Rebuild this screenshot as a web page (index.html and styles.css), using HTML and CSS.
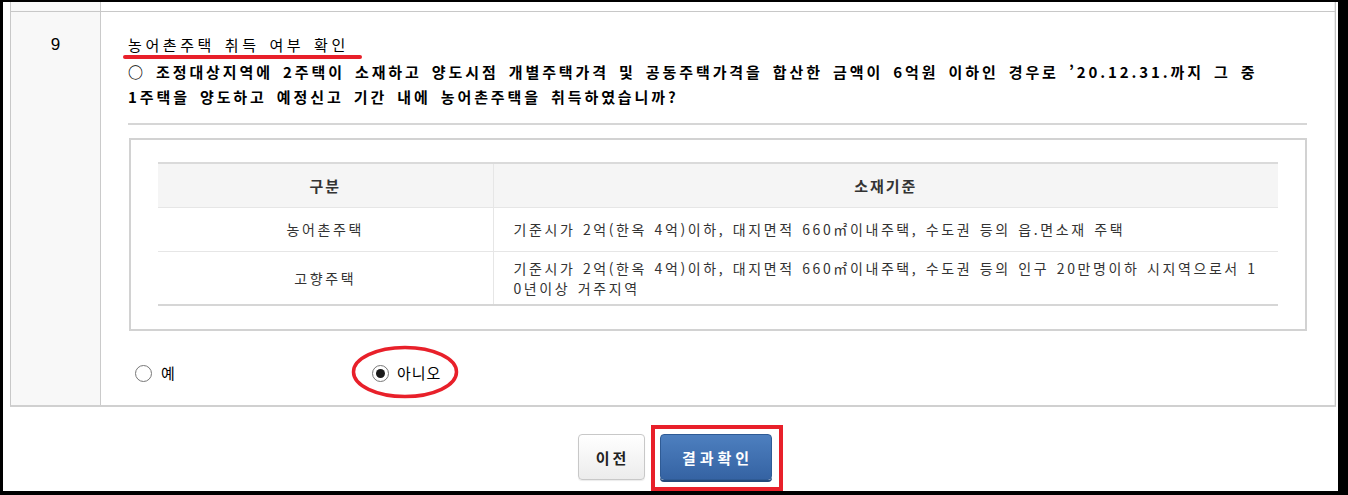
FILE: index.html
```html
<!DOCTYPE html>
<html lang="ko">
<head>
<meta charset="utf-8">
<title>농어촌주택 취득 여부 확인</title>
<link rel="stylesheet" href="styles.css">
</head>
<body>
<div class="frame">
  <div class="board">
    <div class="prev-row">
      <div class="num-cell"></div>
      <div class="body-cell"></div>
    </div>
    <div class="row">
      <div class="num-cell num">9</div>
      <div class="body-cell content">
        <div class="q-title">농어촌주택 취득 여부 확인</div>
        <p class="q-text">○ 조정대상지역에 2주택이 소재하고 양도시점 개별주택가격 및 공동주택가격을 합산한 금액이 6억원 이하인 경우로 ’20.12.31.까지 그 중 1주택을 양도하고 예정신고 기간 내에 농어촌주택을 취득하였습니까?</p>
        <div class="divider"></div>
        <div class="info-box">
          <table class="info">
            <thead>
              <tr><th class="c1">구분</th><th class="c2">소재기준</th></tr>
            </thead>
            <tbody>
              <tr class="r1"><td class="c1">농어촌주택</td><td class="c2 left">기준시가 2억(한옥 4억)이하, 대지면적 660㎡이내주택, 수도권 등의 읍.면소재 주택</td></tr>
              <tr class="r2"><td class="c1">고향주택</td><td class="c2 left">기준시가 2억(한옥 4억)이하, 대지면적 660㎡이내주택, 수도권 등의 인구 20만명이하 시지역으로서 10년이상 거주지역</td></tr>
            </tbody>
          </table>
        </div>
        <div class="choices">
          <label class="choice yes"><span class="radio"></span><span class="lbl">예</span></label>
          <label class="choice no"><span class="radio checked"></span><span class="lbl">아니오</span></label>
        </div>
      </div>
    </div>
  </div>
  <div class="actions">
    <button class="btn btn-prev" type="button">이전</button>
    <button class="btn btn-go" type="button">결과확인</button>
  </div>
</div>
<div class="annot">
  <div class="mark-underline"></div>
  <svg class="mark-ellipse" width="1348" height="495" viewBox="0 0 1348 495"><ellipse cx="405" cy="372" rx="51.5" ry="24.5" fill="none" stroke="#e8202a" stroke-width="3.5"/></svg>
  <div class="mark-box"></div>
</div>
</body>
</html>
```
FILE: styles.css
```css
* { box-sizing: border-box; }
html, body { margin: 0; padding: 0; background: #fff; }
body {
  position: relative;
  width: 1348px;
  height: 495px;
  overflow: hidden;
  font-family: "Noto Sans CJK KR", "Noto Sans", sans-serif;
  color: #000;
}
.frame {
  height: 495px;
  border-style: solid;
  border-color: #000;
  border-width: 2px 10px 4px 3px;
  display: flex;
  flex-direction: column;
}
.board {
  margin: 0 2px 0 7px;
  border-left: 1px solid #c8c8c8;
  border-right: 1px solid #c4c4c4;
  border-bottom: 2px solid #d0d0d0;
}
.prev-row, .row { display: flex; }
.prev-row { height: 10px; border-bottom: 1px solid #c8c8c8; }
.num-cell {
  width: 90px;
  flex: none;
  background: #f8f8f8;
  border-right: 1px solid #cacaca;
}
.body-cell { flex: 1; border-right: 1px solid #ececec; }
.row { height: 393px; }
.num {
  text-align: center;
  font-size: 17px;
  line-height: 22px;
  padding-top: 22px;
  font-family: "Liberation Sans", "Noto Sans CJK KR", sans-serif;
}
.content { padding: 22px 27px 0 27px; }
.q-title {
  font-size: 15px;
  line-height: 22px;
  letter-spacing: 3.6px;
  word-spacing: 2px;
}
.q-text {
  margin: 3px 0 0;
  font-size: 15px;
  font-weight: bold;
  line-height: 25px;
  letter-spacing: 2.9px;
  word-spacing: 3px;
  word-break: keep-all;
}
.divider {
  margin-top: 14px;
  border-top: 2px solid #d6d6d6;
}
.info-box {
  margin-top: 13px;
  margin-left: 1px;
  height: 193px;
  border: 2px solid #d2d2d2;
  padding: 22px 27px 0 27px;
}
.info {
  width: 100%;
  border-collapse: collapse;
  font-size: 14px;
  color: #333;
  letter-spacing: 2.6px;
  word-spacing: 1px;
}
.info thead tr { border-top: 2px solid #dadada; background: #f5f5f5; }
.info th {
  height: 44px;
  font-weight: bold;
  font-size: 15px;
  color: #333;
  letter-spacing: 2px;
  border-bottom: 1px solid #e6e6e6;
}
.info td {
  border-bottom: 1px solid #e6e6e6;
  text-align: center;
  line-height: 20px;
}
.info tr.r1 td { height: 44px; }
.info tr.r2 td { height: 54px; border-bottom: 2px solid #d6d6d6; }
.info .c1 { width: 335px; border-right: 1px solid #e6e6e6; }
.info td.left { text-align: left; padding: 0 18px 0 20px; word-break: break-all; }
.choices {
  display: flex;
  align-items: center;
  height: 30px;
  margin-top: 27px;
  font-size: 15px;
}
.choice { display: flex; align-items: center; }
.choice.yes { margin-left: 7px; width: 237px; }
.radio {
  width: 17px;
  height: 17px;
  border-radius: 50%;
  border: 1px solid #777;
  background: #fff;
  position: relative;
  margin-right: 9px;
}
.radio.checked::after {
  content: "";
  position: absolute;
  left: 3px; top: 3px;
  width: 9px; height: 9px;
  border-radius: 50%;
  background: #1a1a1a;
}
.choice.no .radio { margin-right: 8px; }
.lbl { line-height: 20px; letter-spacing: 1px; }
.actions {
  display: flex;
  justify-content: center;
  gap: 15px;
  margin-top: 27px;
  padding-left: 8px;
}
.btn {
  height: 46px;
  border-radius: 4px;
  font-family: "Noto Sans CJK KR", sans-serif;
  font-size: 15px;
  font-weight: bold;
  padding: 0;
}
.btn-prev {
  width: 67px;
  color: #222;
  letter-spacing: 3px;
  padding-left: 3px;
  background: linear-gradient(#ffffff, #ececec);
  border: 1px solid #c8c8c8;
  box-shadow: 0 1px 1px rgba(0,0,0,0.08);
}
.btn-go {
  width: 112px;
  color: #fff;
  letter-spacing: 4px;
  padding-left: 4px;
  background: linear-gradient(#4d7fbf, #3563a3);
  border: 1px solid #2f5b95;
  box-shadow: 0 2px 0 #244a7c;
}
.annot { position: absolute; inset: 0; pointer-events: none; }
.mark-underline {
  position: absolute;
  left: 123px; top: 55px;
  width: 239px; height: 4px;
  border-radius: 2px;
  background: #e8202a;
}
.mark-ellipse { position: absolute; left: 0; top: 0; }
.mark-box {
  position: absolute;
  left: 651px; top: 425px;
  width: 132px; height: 66px;
  border: 4px solid #e8202a;
}
```
